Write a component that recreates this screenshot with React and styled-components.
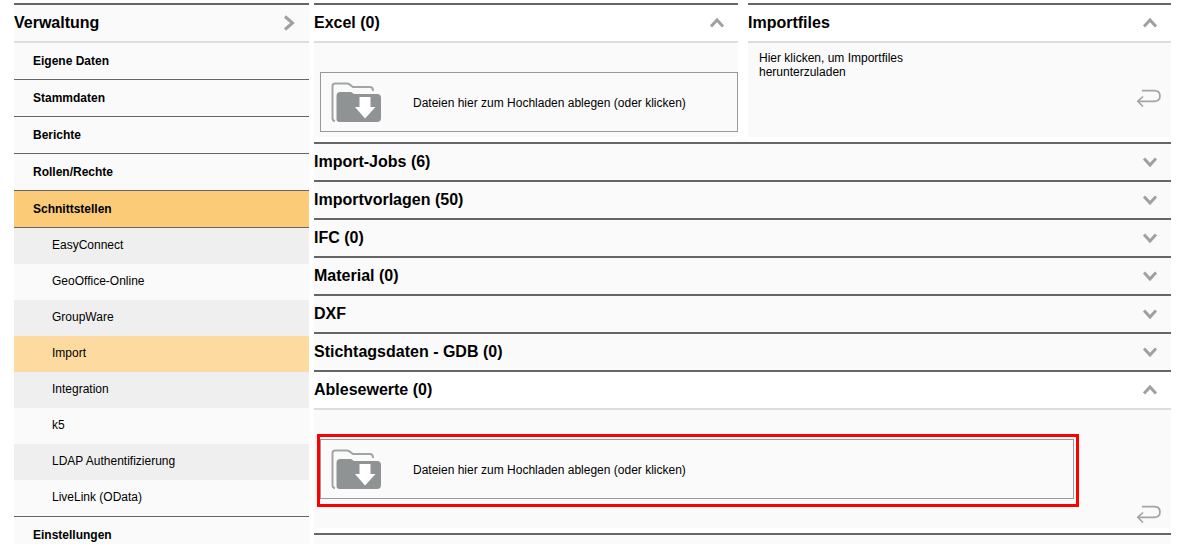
import styled, { createGlobalStyle } from "styled-components";

const menuTop = [
    { label: "Eigene Daten" },
    { label: "Stammdaten" },
    { label: "Berichte" },
    { label: "Rollen/Rechte" },
    { label: "Schnittstellen", active: true },
];

const subMenu = [
    { label: "EasyConnect", shade: true },
    { label: "GeoOffice-Online" },
    { label: "GroupWare", shade: true },
    { label: "Import", active: true },
    { label: "Integration", shade: true },
    { label: "k5" },
    { label: "LDAP Authentifizierung", shade: true },
    { label: "LiveLink (OData)" },
];

const closedRows = [
    "Import-Jobs (6)",
    "Importvorlagen (50)",
    "IFC (0)",
    "Material (0)",
    "DXF",
    "Stichtagsdaten - GDB (0)",
];

function Chevron({ dir }) {
    const points = {
        up: "2,9.5 8,3 14,9.5",
        down: "2,2.5 8,9 14,2.5",
    };
    return (
        <ChevronIcon width="16" height="12" viewBox="0 0 16 12">
            <polyline points={points[dir]} />
        </ChevronIcon>
    );
}

function ReturnArrow() {
    return (
        <ReturnIcon width="25" height="20" viewBox="0 0 25 20">
            <path d="M2 13.3 H18 C22 13.3 24 11 24 8 C24 5 22 2.700 18 2.700 H6" />
            <path d="M7 8.500 L1.800 13.300 L7 18.500" />
        </ReturnIcon>
    );
}

function FolderDown() {
    return (
        <FolderIcon width="50" height="41" viewBox="0 0 50 41">
            <path
                d="M4 39 Q1.500 39 1.500 36 V4 Q1.500 1.500 4 1.500 H16 Q18 1.500 20 3.500 L22 5 H39 Q42 5 42 9"
                fill="none"
                stroke="#a3a5a5"
                strokeWidth="2"
            />
            <path
                d="M5.500 14 Q5.500 10 9.500 10 H20 L23 12 H46 Q50 12 50 16 V36 Q50 40 46 40 H8.500 Q5.500 40 5.500 37 Z"
                fill="#909393"
            />
            <path d="M28.500 15 H39.500 V25 H44.500 L34 36.500 L24 25 H28.500 Z" fill="#fff" />
        </FolderIcon>
    );
}

function Dropzone({ marked }) {
    return (
        <DropBox>
            <FolderDown />
            <DropText>Dateien hier zum Hochladen ablegen (oder klicken)</DropText>
            {marked && <Marker />}
        </DropBox>
    );
}

export default function App() {
    return (
        <>
            <GlobalStyle />
            <Page>
                <Sidebar>
                    <SideHeader>
                        <HeaderTitle>Verwaltung</HeaderTitle>
                        <ArrowIcon width="12" height="16" viewBox="0 0 12 16">
                            <polyline points="2,1.500 9.500,8 2,14.500" />
                        </ArrowIcon>
                    </SideHeader>
                    {menuTop.map((item) => (
                        <MenuItem key={item.label} $active={item.active}>
                            {item.label}
                        </MenuItem>
                    ))}
                    {subMenu.map((item) => (
                        <SubItem key={item.label} $active={item.active} $shade={item.shade}>
                            {item.label}
                        </SubItem>
                    ))}
                    <MenuTopLine />
                    <MenuItem>Einstellungen</MenuItem>
                </Sidebar>

                <Content>
                    <TopPanels>
                        <Panel>
                            <OpenHeader>
                                <HeaderTitle>Excel (0)</HeaderTitle>
                                <Chevron dir="up" />
                            </OpenHeader>
                            <ExcelBody>
                                <Dropzone />
                            </ExcelBody>
                        </Panel>
                        <Panel>
                            <OpenHeader>
                                <HeaderTitle>Importfiles</HeaderTitle>
                                <Chevron dir="up" />
                            </OpenHeader>
                            <FilesBody>
                                <FilesText>Hier klicken, um Importfiles herunterzuladen</FilesText>
                                <ReturnArrow />
                            </FilesBody>
                        </Panel>
                    </TopPanels>

                    {closedRows.map((title) => (
                        <ClosedRow key={title}>
                            <HeaderTitle>{title}</HeaderTitle>
                            <Chevron dir="down" />
                        </ClosedRow>
                    ))}

                    <Panel>
                        <OpenHeader>
                            <HeaderTitle>Ablesewerte (0)</HeaderTitle>
                            <Chevron dir="up" />
                        </OpenHeader>
                        <ReadingsBody>
                            <ReadingsDrop>
                                <Dropzone marked />
                            </ReadingsDrop>
                            <ReturnArrow />
                        </ReadingsBody>
                    </Panel>
                    <EndRow />
                </Content>
            </Page>
        </>
    );
}

const GlobalStyle = createGlobalStyle`
html, body {
    margin: 0;
    height: 544px;
    overflow: hidden;
    background: #fff;
}
* {
    box-sizing: border-box;
}
`;

const Page = styled.div`
display: grid;
grid-template-columns: 295px 857px;
column-gap: 5px;
padding: 3px 0 0 14px;
font-family: "Liberation Sans", Arial, sans-serif;
color: #000;
`;

const Sidebar = styled.nav`
display: flex;
flex-flow: column;
`;

const SideHeader = styled.div`
height: 40px;
flex: none;
display: flex;
align-items: center;
justify-content: space-between;
padding-right: 14px;
background: #fafafa;
border-top: 2px solid #666;
border-bottom: 2px solid #ddd;
`;

const HeaderTitle = styled.span`
font-size: 16px;
font-weight: 700;
`;

const ArrowIcon = styled.svg`
fill: none;
stroke: #a0a0a0;
stroke-width: 3;
`;

const MenuItem = styled.div`
height: 37px;
flex: none;
display: flex;
align-items: center;
padding-left: 19px;
font-size: 12px;
font-weight: 700;
background: ${(props) => (props.$active ? "#fccb78" : "#fafafa")};
border-bottom: 1px solid #666;
`;

const MenuTopLine = styled.div`
height: 1px;
flex: none;
background: #666;
`;

const SubItem = styled.div`
height: 36px;
flex: none;
display: flex;
align-items: center;
padding: 0 0 2px 38px;
font-size: 12px;
background: ${(props) =>
    props.$active ? "#fddba0" : props.$shade ? "#efefef" : "#fafafa"};
`;

const Content = styled.main`
display: flex;
flex-flow: column;
`;

const TopPanels = styled.div`
display: grid;
grid-template-columns: 424px 423px;
column-gap: 10px;
margin-bottom: 5px;
`;

const Panel = styled.section`
display: flex;
flex-flow: column;
`;

const OpenHeader = styled.div`
height: 40px;
display: flex;
align-items: center;
justify-content: space-between;
padding-right: 13px;
background: #fff;
border-top: 2px solid #666;
border-bottom: 2px solid #ddd;
`;

const ClosedRow = styled.div`
height: 38px;
display: flex;
align-items: center;
justify-content: space-between;
padding-right: 13px;
background: #fafafa;
border-top: 2px solid #666;
`;

const ChevronIcon = styled.svg`
fill: none;
stroke: #a0a0a0;
stroke-width: 3;
`;

const ExcelBody = styled.div`
height: 94px;
padding: 29px 0 5px 6px;
background: #fafafa;
display: flex;
`;

const DropBox = styled.div`
position: relative;
flex: 1;
height: 60px;
display: flex;
align-items: center;
padding-left: 10px;
border: 1px solid #999;
`;

const FolderIcon = styled.svg`
flex: none;
margin-top: 1px;
`;

const DropText = styled.span`
margin: 2px 0 0 32px;
font-size: 12px;
`;

const Marker = styled.div`
position: absolute;
top: -6px;
left: -4px;
right: -6px;
bottom: -9px;
border: 3.5px solid #f00;
pointer-events: none;
`;

const FilesBody = styled.div`
height: 94px;
padding: 8px 10px 0 11px;
background: #fafafa;
display: flex;
flex-flow: column;
`;

const FilesText = styled.p`
margin: 0;
width: 180px;
font-size: 12px;
line-height: 14px;
`;

const ReturnIcon = styled.svg`
flex: none;
align-self: flex-end;
margin-top: 9px;
fill: none;
stroke: #a4a4a4;
stroke-width: 1.700;
`;

const ReadingsBody = styled.div`
height: 118px;
margin-bottom: 5px;
padding: 29px 10px 0 6px;
background: #fafafa;
display: flex;
flex-flow: column;

${ReturnIcon} {
    margin-top: 5px;
}
`;

const ReadingsDrop = styled.div`
width: 754px;
display: flex;
`;

const EndRow = styled.div`
height: 11px;
background: #fafafa;
border-top: 2px solid #666;
`;
